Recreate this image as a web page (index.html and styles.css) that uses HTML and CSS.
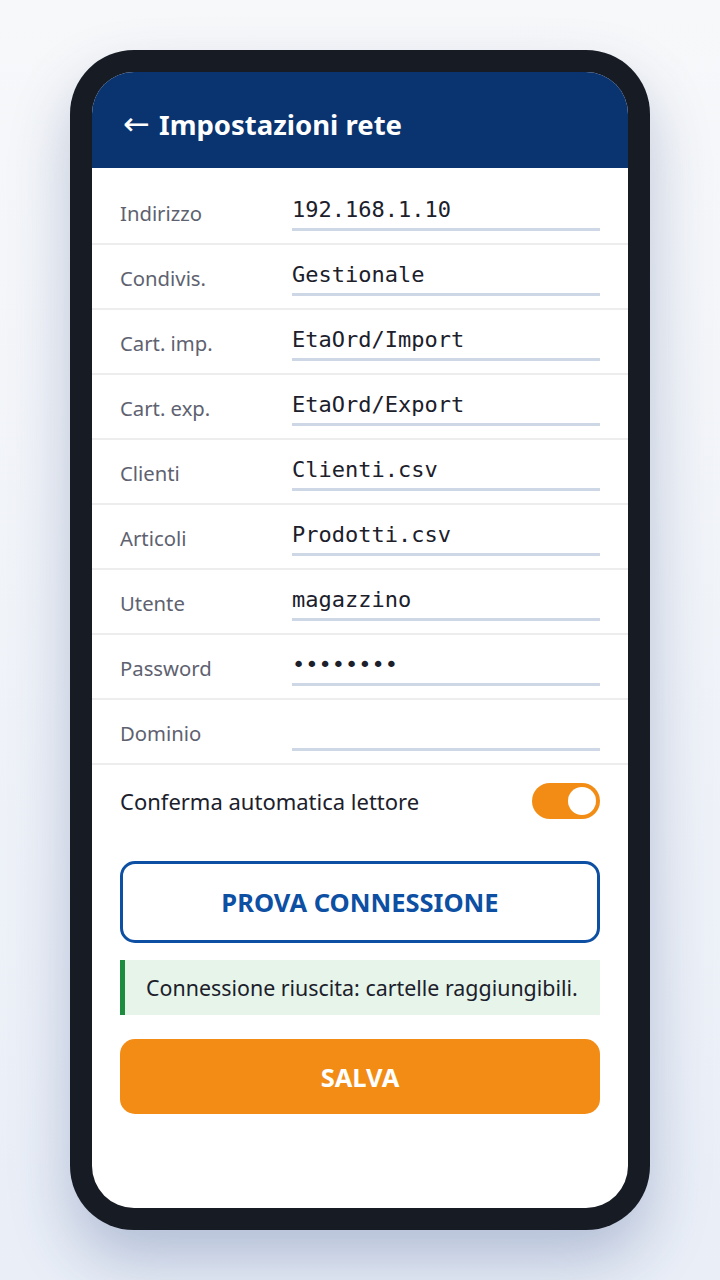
FILE: index.html
```html
<!DOCTYPE html>
<html lang="it">
<head>
    <meta charset="UTF-8">
    <meta name="viewport" content="width=device-width, initial-scale=1.0">
    <title>Impostazioni rete</title>
    <link rel="stylesheet" href="styles.css">
</head>
<body>
    <div class="phone">
        <div class="screen">
            <div class="topbar">
                <h1><span class="back">&larr;</span> Impostazioni rete</h1>
            </div>

            <div class="content">
                <div class="field">
                    <label for="host">Indirizzo</label>
                    <input type="text" id="host" value="192.168.1.10">
                </div>
                <div class="field">
                    <label for="share">Condivis.</label>
                    <input type="text" id="share" value="Gestionale">
                </div>
                <div class="field">
                    <label for="imp">Cart. imp.</label>
                    <input type="text" id="imp" value="EtaOrd/Import">
                </div>
                <div class="field">
                    <label for="exp">Cart. exp.</label>
                    <input type="text" id="exp" value="EtaOrd/Export">
                </div>
                <div class="field">
                    <label for="clients">Clienti</label>
                    <input type="text" id="clients" value="Clienti.csv">
                </div>
                <div class="field">
                    <label for="items">Articoli</label>
                    <input type="text" id="items" value="Prodotti.csv">
                </div>
                <div class="field">
                    <label for="user">Utente</label>
                    <input type="text" id="user" value="magazzino">
                </div>
                <div class="field">
                    <label for="pass">Password</label>
                    <input type="password" id="pass" value="12345678">
                </div>
                <div class="field">
                    <label for="domain">Dominio</label>
                    <input type="text" id="domain" value="">
                </div>

                <div class="switch-row">
                    <span>Conferma automatica lettore</span>
                    <span class="switch on"><span class="knob"></span></span>
                </div>

                <button class="btn btn-outline">PROVA CONNESSIONE</button>

                <div class="notice">Connessione riuscita: cartelle raggiungibili.</div>

                <button class="btn btn-primary">SALVA</button>
            </div>
        </div>
    </div>
</body>
</html>
```

FILE: styles.css
```css
* { box-sizing: border-box; }
body { margin: 0; padding: 50px 0; font-family: "Noto Sans", "Open Sans", Arial, sans-serif; background: linear-gradient(180deg, #f7f8fa 0%, #e9eef7 100%); min-height: 1280px; }
.phone { width: 580px; height: 1180px; margin: 0 auto; padding: 22px; background: #161b24; border-radius: 64px; box-shadow: 0 30px 60px rgba(40, 70, 130, 0.28); }
.screen { height: 100%; background: #fff; border-radius: 42px; overflow: hidden; }
.topbar { height: 96px; background: #0a3470; padding: 8px 31px 0; display: flex; align-items: center; }
.topbar h1 { margin: 0; color: #fff; font-size: 27.5px; font-weight: 700; line-height: 36px; }
.topbar .back { font-family: "DejaVu Sans", sans-serif; font-weight: 400; font-size: 32px; margin-right: 2px; }
.content { padding: 12px 28px 0; }
.field { display: grid; grid-template-columns: 172px 1fr; align-items: center; padding: 10px 28px 12px; border-bottom: 2px solid #ededed; margin: 0 -28px; }
.field label { color: #5e6270; font-size: 20.3px; padding-top: 4px; }
.field input { height: 41px; border: 0; border-bottom: 3px solid #cdd7e6; padding: 0; font-family: "DejaVu Sans Mono", "Liberation Mono", monospace; font-size: 22px; color: #1b202b; background: transparent; outline: none; width: 100%; }
.switch-row { display: flex; justify-content: space-between; align-items: center; margin-top: 18px; font-size: 22px; color: #1b202b; }
.switch { width: 68px; height: 36px; border-radius: 18px; background: #f28c14; position: relative; }
.switch .knob { position: absolute; right: 4px; top: 4px; width: 28px; height: 28px; border-radius: 50%; background: #fff; }
.btn { display: block; width: 100%; font-family: inherit; font-weight: 700; font-size: 25.5px; cursor: pointer; }
.btn-outline { margin-top: 42px; height: 82px; background: #fff; color: #0d4fa3; border: 3px solid #0d4fa3; border-radius: 15px; }
.notice { margin-top: 17px; height: 55px; display: flex; align-items: center; padding-left: 21px; background: #e6f4ea; border-left: 5px solid #1e8c3e; font-size: 21.4px; color: #1b202b; }
.btn-primary { margin-top: 24px; height: 75px; background: #f28c14; color: #fff; border: 0; border-radius: 15px; }
```
